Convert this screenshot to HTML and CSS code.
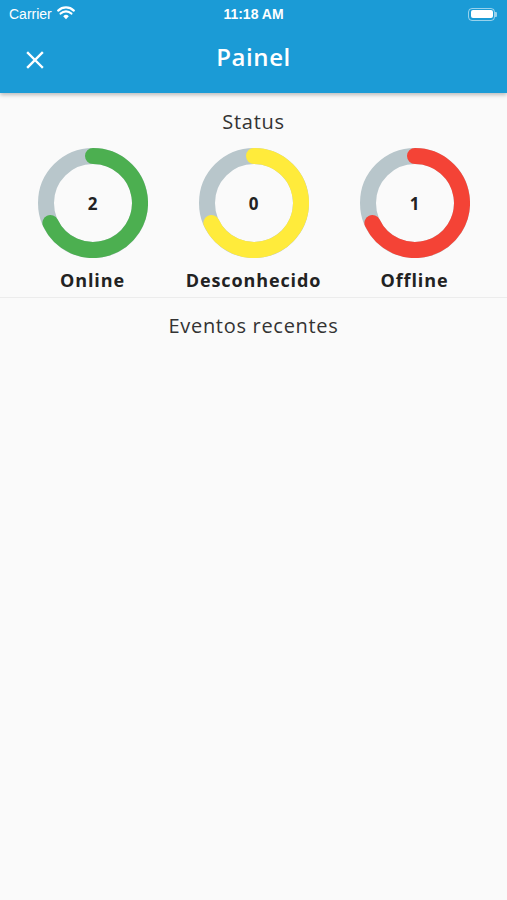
FILE: index.html
```html
<html>

<head>
    <title>Painel</title>
    <link rel="stylesheet" href="styles.css">
</head>

<body>
    <header class="top">
        <div class="status-bar">
            <div class="carrier">
                Carrier
                <svg class="wifi" width="18" height="14" viewBox="0 0 18 14">
                    <path d="M9 13.2 L6.2 10.2 A4 4 0 0 1 11.8 10.2 Z" fill="#fff" />
                    <path d="M3.6 7.6 A7.6 7.6 0 0 1 14.4 7.6" fill="none" stroke="#fff" stroke-width="2.2" stroke-linecap="round" />
                    <path d="M1.2 4.6 A11.2 11.2 0 0 1 16.8 4.6" fill="none" stroke="#fff" stroke-width="2.2" stroke-linecap="round" />
                </svg>
            </div>
            <div class="clock">11:18 AM</div>
            <div class="battery">
                <span class="battery-body"><span class="battery-level"></span></span>
                <span class="battery-nub"></span>
            </div>
        </div>
        <div class="app-bar">
            <svg class="close" width="18" height="18" viewBox="0 0 18 18">
                <path d="M2 2 L16 16 M16 2 L2 16" stroke="#fff" stroke-width="2.4" stroke-linecap="square" />
            </svg>
            <h1 class="title">Painel</h1>
        </div>
    </header>

    <main>
        <h2 class="section-title">Status</h2>
        <div class="donuts">
            <div class="donut-item">
                <div class="donut">
                    <svg width="110" height="110" viewBox="0 0 110 110">
                        <circle cx="55" cy="55" r="47" class="track" />
                        <path d="M55 8 A47 47 0 1 1 12.4 74.9" class="arc online" />
                    </svg>
                    <span class="count">2</span>
                </div>
                <div class="label">Online</div>
            </div>
            <div class="donut-item">
                <div class="donut">
                    <svg width="110" height="110" viewBox="0 0 110 110">
                        <circle cx="55" cy="55" r="47" class="track" />
                        <path d="M55 8 A47 47 0 1 1 12.4 74.9" class="arc unknown" />
                    </svg>
                    <span class="count">0</span>
                </div>
                <div class="label">Desconhecido</div>
            </div>
            <div class="donut-item">
                <div class="donut">
                    <svg width="110" height="110" viewBox="0 0 110 110">
                        <circle cx="55" cy="55" r="47" class="track" />
                        <path d="M55 8 A47 47 0 1 1 12.4 74.9" class="arc offline" />
                    </svg>
                    <span class="count">1</span>
                </div>
                <div class="label">Offline</div>
            </div>
        </div>
        <div class="divider"></div>
        <h2 class="section-title events">Eventos recentes</h2>
    </main>
</body>

</html>
```

FILE: styles.css
```css
* {
    margin: 0;
    padding: 0;
    box-sizing: border-box;
}

:root {
    --blue: #1b9bd6;
    --green: #4caf50;
    --yellow: #ffeb3b;
    --red: #f44336;
    --track: #b8c6cb;
    --text: #222;
}

body {
    font-family: "Open Sans", "Noto Sans", sans-serif;
    background-color: #fafafa;
    color: var(--text);
    height: 900px;
}

/* top bars */
.top {
    background-color: var(--blue);
    color: white;
    box-shadow: 0 2px 4px rgba(0, 0, 0, 0.25);
    position: relative;
}

.status-bar {
    height: 28px;
    display: grid;
    grid-template-columns: 1fr auto 1fr;
    align-items: center;
    padding: 0 9px;
    font-family: "Liberation Sans", sans-serif;
    font-size: 14px;
}

.carrier {
    display: flex;
    align-items: center;
    gap: 5px;
}

.wifi {
    margin-top: -2px;
}

.clock {
    font-weight: bold;
}

.battery {
    justify-self: end;
    display: flex;
    align-items: center;
    padding-right: 1px;
}

.battery-body {
    width: 27px;
    height: 13px;
    border: 1px solid rgba(255, 255, 255, 0.55);
    border-radius: 4px;
    padding: 1.5px;
    display: flex;
}

.battery-level {
    flex: 1;
    background: white;
    border-radius: 2px;
}

.battery-nub {
    width: 2px;
    height: 5px;
    background: rgba(255, 255, 255, 0.55);
    border-radius: 0 1px 1px 0;
}

.app-bar {
    height: 65px;
    display: flex;
    align-items: center;
    justify-content: center;
    position: relative;
}

.close {
    position: absolute;
    left: 26px;
    top: 23px;
}

.title {
    font-size: 24px;
    font-weight: 600;
    letter-spacing: 0.6px;
    margin-top: -8px;
}

/* content */
.section-title {
    font-size: 20px;
    font-weight: normal;
    letter-spacing: 0.7px;
    text-align: center;
    color: #333;
    line-height: 26px;
    padding-top: 16px;
}

.donuts {
    display: grid;
    grid-template-columns: repeat(3, 1fr);
    padding: 0 12px;
    margin-top: 13px;
}

.donut-item {
    display: flex;
    flex-direction: column;
    align-items: center;
}

.donut {
    width: 110px;
    height: 110px;
    position: relative;
    display: flex;
    align-items: center;
    justify-content: center;
}

.donut svg {
    position: absolute;
    left: 0;
    top: 0;
}

.track {
    fill: none;
    stroke: var(--track);
    stroke-width: 16;
}

.arc {
    fill: none;
    stroke-width: 16;
    stroke-linecap: round;
}

.online { stroke: var(--green); }
.unknown { stroke: var(--yellow); }
.offline { stroke: var(--red); }

.count {
    position: relative;
    font-size: 17px;
    font-weight: bold;
}

.label {
    font-size: 18px;
    font-weight: bold;
    letter-spacing: 0.9px;
    line-height: 24px;
    margin-top: 10px;
}

.divider {
    height: 1px;
    background: #ececec;
    margin-top: 5px;
}

.section-title.events {
    padding-top: 15px;
}
```
